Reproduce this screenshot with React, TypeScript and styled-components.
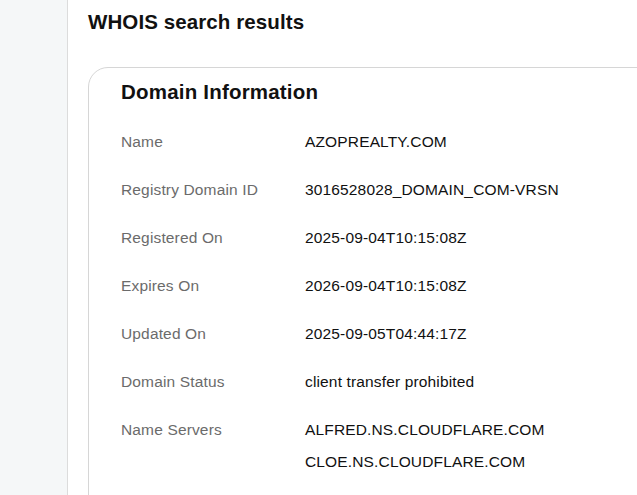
import styled, { createGlobalStyle } from 'styled-components';

const GlobalStyle = createGlobalStyle`
    html, body {
        margin: 0;
        padding: 0;
        overflow: hidden;
        background: #ffffff;
    }
    body {
        font-family: "Liberation Sans", Arial, sans-serif;
        color: #111111;
    }
`;

const rows: { label: string; values: string[] }[] = [
    { label: 'Name', values: ['AZOPREALTY.COM'] },
    { label: 'Registry Domain ID', values: ['3016528028_DOMAIN_COM-VRSN'] },
    { label: 'Registered On', values: ['2025-09-04T10:15:08Z'] },
    { label: 'Expires On', values: ['2026-09-04T10:15:08Z'] },
    { label: 'Updated On', values: ['2025-09-05T04:44:17Z'] },
    { label: 'Domain Status', values: ['client transfer prohibited'] },
    { label: 'Name Servers', values: ['ALFRED.NS.CLOUDFLARE.COM', 'CLOE.NS.CLOUDFLARE.COM'] },
];

export default function App() {
    return (
        <>
            <GlobalStyle />
            <Page>
                <Sidebar />
                <Main>
                    <Title>WHOIS search results</Title>
                    <Card>
                        <CardTitle>Domain Information</CardTitle>
                        <InfoList>
                            {rows.map((row) => (
                                <Row key={row.label}>
                                    <Label>{row.label}</Label>
                                    <Values>
                                        {row.values.map((v) => (
                                            <Value key={v}>{v}</Value>
                                        ))}
                                    </Values>
                                </Row>
                            ))}
                        </InfoList>
                    </Card>
                </Main>
            </Page>
        </>
    );
}

const Page = styled.div`
    display: flex;
    height: 100vh;
`;

const Sidebar = styled.aside`
    flex: 0 0 67px;
    background: #f5f7f8;
    border-right: 1px solid #dcdcdc;
`;

const Main = styled.main`
    flex: 1;
    padding: 10px 0 0 20px;
    min-width: 0;
    overflow: hidden;
`;

const Title = styled.h1`
    margin: 0;
    font-size: 20.5px;
    line-height: 24px;
    font-weight: 700;
    letter-spacing: 0.1px;
    color: #111111;
`;

const Card = styled.section`
    margin-top: 33px;
    width: 640px;
    min-height: 500px;
    border: 1px solid #d6d6d6;
    border-radius: 20px 0 0 0;
    padding: 12px 0 0 32px;
    box-sizing: border-box;
`;

const CardTitle = styled.h2`
    margin: 0;
    font-size: 20.5px;
    line-height: 24px;
    font-weight: 700;
    letter-spacing: 0.2px;
    color: #111111;
`;

const InfoList = styled.dl`
    margin: 27px 0 0;
    display: flex;
    flex-direction: column;
    gap: 26px;
`;

const Row = styled.div`
    display: grid;
    grid-template-columns: 184px 1fr;
`;

const Label = styled.dt`
    font-size: 15.5px;
    line-height: 22px;
    letter-spacing: 0.15px;
    color: #6b6b6b;
`;

const Values = styled.dd`
    margin: 0;
    display: flex;
    flex-direction: column;
    gap: 10px;
`;

const Value = styled.span`
    font-size: 15.5px;
    line-height: 22px;
    letter-spacing: 0.15px;
    color: #111111;
`;
